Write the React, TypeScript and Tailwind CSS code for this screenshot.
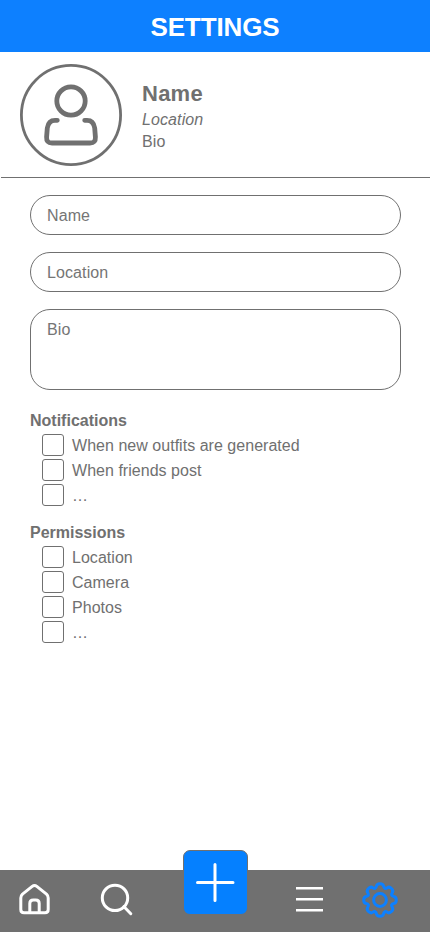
import React from "react";

function Field({ label, tall = false }: { label: string; tall?: boolean }) {
  return tall ? (
    <textarea
      placeholder={label}
      className="block h-[81px] w-[371px] resize-none rounded-[20px] border border-[#707070] px-4 pt-2 leading-6 tracking-[0.1px] outline-none placeholder:text-[#757575]"
    />
  ) : (
    <input
      placeholder={label}
      className="block h-10 w-[371px] rounded-[20px] border border-[#707070] px-4 pt-0.5 tracking-[0.1px] outline-none placeholder:text-[#757575]"
    />
  );
}

function Options({ title, items }: { title: string; items: string[] }) {
  return (
    <section>
      <h2 className="h-6 text-base leading-6 font-bold">{title}</h2>
      <ul className="flex flex-col gap-[3px] pt-px pl-3">
        {items.map((item) => (
          <li key={item}>
            <label className="flex h-[22px] items-center gap-2">
              <input type="checkbox" className="size-[22px] shrink-0 appearance-none rounded-[3px] border border-[#707070] bg-white" />
              <span className="pt-0.5 leading-[22px] tracking-[0.03px]">{item}</span>
            </label>
          </li>
        ))}
      </ul>
    </section>
  );
}

function Person() {
  return (
    <svg width="102" height="102" viewBox="0 0 102 102" fill="none" stroke="#707070">
      <circle cx="51" cy="51" r="49.6" strokeWidth="2.8" />
      <circle cx="51" cy="37" r="14.2" strokeWidth="4.8" />
      <path d="M37.3 56.3H35C30 56.3 28 59 27.3 64L26.6 73C26.4 77 28 79 32 79H70C74 79 75.6 77 75.4 73L74.7 64C74 59 72 56.3 67 56.3H64.7" strokeWidth="4.8" strokeLinecap="round" />
    </svg>
  );
}

const tooth = "M-4.9 -11.83C-3.9 -12.2 -3.7 -12.8 -3.6 -13.6C-3.3 -15.6 -2.1 -16.3 0 -16.3C2.1 -16.3 3.3 -15.6 3.6 -13.6C3.7 -12.8 3.9 -12.2 4.9 -11.83";

function Gear() {
  return (
    <svg width="36" height="36" viewBox="-18 -18 36 36" fill="none" stroke="#0d80ff" strokeWidth="3" strokeLinecap="round">
      <circle r="6.4" />
      {[0, 45, 90, 135, 180, 225, 270, 315].map((angle) => (
        <path key={angle} d={tooth} transform={`rotate(${angle})`} />
      ))}
    </svg>
  );
}

export default function App() {
  return (
    <div className="flex h-[932px] w-[430px] flex-col overflow-hidden bg-white font-['Liberation_Sans',Arial,sans-serif] text-base text-[#707070]">
      <header className="flex h-[52px] shrink-0 items-center justify-center bg-[#0d80ff] pt-px">
        <h1 className="text-[26px] leading-[30px] font-bold tracking-[-0.1px] text-white">SETTINGS</h1>
      </header>
      <div className="flex h-[125px] shrink-0 gap-5 pt-3 pl-5">
        <Person />
        <div className="pt-[17px]">
          <p className="text-[22px] leading-[26px] font-bold tracking-[0.25px]">Name</p>
          <p className="pt-0.5 leading-[22px] tracking-[0.1px] italic">Location</p>
          <p className="leading-[22px] tracking-[0.1px]">Bio</p>
        </div>
      </div>
      <hr className="ml-px w-[429px] shrink-0 border-t border-[#707070]" />
      <main className="flex flex-1 flex-col pt-[17px] pl-[30px]">
        <form className="flex flex-col gap-[17px]">
          <Field label="Name" />
          <Field label="Location" />
          <Field label="Bio" tall />
        </form>
        <div className="flex flex-col gap-[15px] pt-[19px]">
          <Options title="Notifications" items={["When new outfits are generated", "When friends post", "…"]} />
          <Options title="Permissions" items={["Location", "Camera", "Photos", "…"]} />
        </div>
      </main>
      <nav className="flex h-[62px] shrink-0 bg-[#707070]">
        <a className="mt-[13px] ml-[18px]">
          <svg width="34" height="34" viewBox="0 0 34 34" fill="none" stroke="white" strokeWidth="3" strokeLinejoin="round">
            <path d="M2.8 15C2.8 13.2 3.2 12.3 4.5 11.1L14.2 3.4C15.8 2.1 17.2 2.1 18.8 3.4L28.5 11.1C29.8 12.3 30.2 13.2 30.2 15V26.6C30.2 28.8 29.2 29.8 27 29.8H6C3.8 29.8 2.8 28.8 2.8 26.6Z" />
            <path d="M11.8 29.8V20.6C11.8 18.2 13 17.1 15.3 17.1H17.7C20 17.1 21.2 18.2 21.2 20.6V29.8" />
          </svg>
        </a>
        <a className="mt-[13px] ml-[48px]">
          <svg width="34" height="34" viewBox="0 0 34 34" fill="none" stroke="white" strokeWidth="3" strokeLinecap="round">
            <circle cx="15" cy="14.9" r="12.7" />
            <path d="M24 23.7L30.8 30.7" />
          </svg>
        </a>
        <a className="-mt-5 ml-[49px] flex h-[65px] w-[65px] items-center justify-center rounded-[7px] border border-[#707070] bg-[#0580ff]">
          <svg width="41" height="41" viewBox="0 0 41 41" stroke="white" strokeWidth="3" strokeLinecap="round">
            <path d="M2.5 20.5H38M20 2.5V38.5" />
          </svg>
        </a>
        <a className="mt-[16px] ml-[48px]">
          <svg width="27" height="28" viewBox="0 0 27 28">
            <path d="M0 1H27V3H0ZM0 12H27V14H0ZM0 23H27V25H0Z" fill="white" />
            <path d="M0 3H27V4H0ZM0 14H27V15H0ZM0 25H27V26H0Z" fill="#b8b8b8" />
          </svg>
        </a>
        <a className="mt-[12px] ml-[39px]"><Gear /></a>
      </nav>
    </div>
  );
}
